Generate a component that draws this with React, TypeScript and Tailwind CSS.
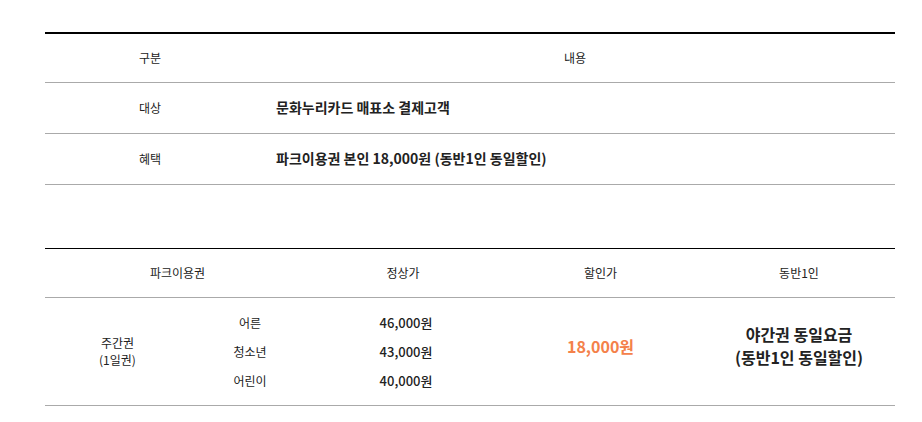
import React from 'react';

const font = { fontFamily: '"Noto Sans CJK KR", "Noto Sans", sans-serif' };

export default function App() {
  return (
    <div className="min-h-[422px] w-[922px] bg-white pl-[45px] pr-[27px] pt-[32px] text-[#222]" style={font}>
      <table className="w-[850px] table-fixed border-collapse border-t-2 border-black">
        <colgroup>
          <col className="w-[210px]" />
          <col />
        </colgroup>
        <thead>
          <tr className="h-[49px] border-b border-[#aaa]">
            <th className="text-center text-[12px] font-normal">구분</th>
            <th className="text-center text-[12px] font-normal">내용</th>
          </tr>
        </thead>
        <tbody>
          <tr className="h-[51px] border-b border-[#aaa]">
            <td className="text-center text-[12px]">대상</td>
            <td className="pl-[21px] text-[14px] font-bold">문화누리카드 매표소 결제고객</td>
          </tr>
          <tr className="h-[51px] border-b border-[#aaa]">
            <td className="text-center text-[12px]">혜택</td>
            <td className="pl-[21px] text-[14px] font-bold">파크이용권 본인 18,000원 (동반1인 동일할인)</td>
          </tr>
        </tbody>
      </table>

      <table className="mt-[63px] w-[850px] table-fixed border-collapse border-t border-black">
        <colgroup>
          <col className="w-[145px]" />
          <col className="w-[120px]" />
          <col className="w-[186px]" />
          <col className="w-[207px]" />
          <col />
        </colgroup>
        <thead>
          <tr className="h-[49px] border-b border-[#aaa]">
            <th colSpan={2} className="text-center text-[12px] font-normal">파크이용권</th>
            <th className="text-center text-[12px] font-normal">정상가</th>
            <th className="pl-[2px] text-center text-[12px] font-normal">할인가</th>
            <th className="text-center text-[12px] font-normal">동반1인</th>
          </tr>
        </thead>
        <tbody>
          <tr className="border-b border-[#aaa]">
            <td className="text-center text-[12px] leading-[17px]">
              주간권
              <br />
              (1일권)
            </td>
            <td className="py-[10px] text-center text-[12px] leading-[29px]">
              <div>어른</div>
              <div>청소년</div>
              <div>어린이</div>
            </td>
            <td className="py-[10px] pl-[6px] text-center text-[13px] font-medium leading-[29px]">
              <div>46,000원</div>
              <div>43,000원</div>
              <div>40,000원</div>
            </td>
            <td className="pb-[10px] pl-[2px] text-center text-[16px] font-bold text-[#f4814a]">18,000원</td>
            <td className="pb-[10px] text-center text-[16px] font-bold leading-[23px]">
              야간권 동일요금
              <br />
              (동반1인 동일할인)
            </td>
          </tr>
        </tbody>
      </table>
    </div>
  );
}
